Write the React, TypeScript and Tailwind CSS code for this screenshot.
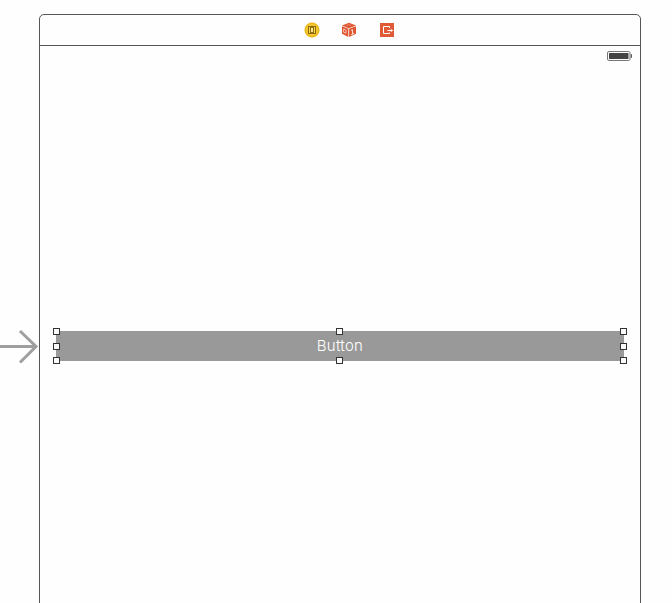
import React from "react";

function ControllerIcon() {
  return (
    <svg className="h-4 w-4" viewBox="0 0 16 16" fill="none">
      <circle cx="8" cy="8" r="7.5" fill="#f5c62c" />
      <circle cx="8" cy="8" r="6.8" stroke="#e8b21c" strokeWidth="1" />
      <rect x="4.5" y="4.5" width="7" height="7" fill="#fbd94f" stroke="#8a6a10" />
      <rect x="6.5" y="5.5" width="3" height="5" fill="#fbe48a" stroke="#94700f" />
    </svg>
  );
}

function ResponderIcon() {
  return (
    <svg className="h-4 w-4" viewBox="0 0 16 16" fill="none">
      <path d="M8 .8 15 3.6 7.7 6.2 1 3.6Z" fill="#df5530" />
      <path d="M1 4.3 7.3 6.8V15L1 11.8Z" fill="#df5530" />
      <path d="M8.1 6.8 15 4.3V11.8L8.1 15Z" fill="#df5530" />
      <path d="M2.6 7 5 8V11.2L2.6 10.2Z" stroke="#f7cabb" strokeWidth=".9" />
      <path d="M10 8.5 11.6 7.7V12.2M10.2 12.6 13 11.4" stroke="#fbe4dc" strokeWidth="1" />
      <path d="m5.4 3.6 2.3-1 2.5 1" stroke="#ee9c85" strokeWidth=".7" />
    </svg>
  );
}

function ExitIcon() {
  return (
    <svg className="h-4 w-4" viewBox="0 0 16 16" fill="none">
      <rect x="1" y="1" width="14" height="14" fill="#e05a36" />
      <path d="M10.5 6V4.5H4.5V11.5H10.5V10.5" stroke="#fff" strokeWidth="1" />
      <path d="M8.5 8.5H13.5" stroke="#fff" strokeWidth="1" />
      <path d="M11.8 6.8 14 8.5 11.8 10.2Z" fill="#fff" />
    </svg>
  );
}

function Handle() {
  return <i className="size-[7px] border border-[#333] bg-[#fafafa]" />;
}

function Handles() {
  return (
    <div className="absolute -inset-[3px] flex flex-col">
      <div className="grid grid-cols-[283px_284px_7px]">
        <Handle />
        <Handle />
        <Handle />
      </div>
      <div className="mt-2 flex justify-between">
        <Handle />
        <Handle />
      </div>
      <div className="mt-[7px] grid grid-cols-[283px_284px_7px]">
        <Handle />
        <Handle />
        <Handle />
      </div>
    </div>
  );
}

export default function App() {
  return (
    <div className="flex h-[603px] w-[672px] overflow-hidden bg-[#fefefe] pt-3.5 font-[Inter,sans-serif]">
      <div className="w-[39px] shrink-0 pt-[312px]">
        <svg className="block h-10 w-[39px]" viewBox="0 0 39 40" fill="none" stroke="#9f9f9f" strokeWidth="3">
          <path d="M0 20.5H36M20 5 36 20.5 20 36.5" />
        </svg>
      </div>
      <main className="flex h-[600px] w-[602px] shrink-0 flex-col rounded-t-[5px] border border-[#555] bg-[#fefefe]">
        <header className="flex h-[31px] shrink-0 items-center border-b border-[#555] pl-[264px]">
          <ControllerIcon />
          <div className="mr-[22px] ml-[21px]">
            <ResponderIcon />
          </div>
          <ExitIcon />
        </header>
        <div className="flex justify-end pt-[5px] pr-2">
          <svg className="block h-[10px] w-[25px]" viewBox="0 0 25 10" fill="none">
            <rect x=".5" y=".5" width="22.5" height="9" rx="1.5" stroke="#777" />
            <rect x="2" y="2" width="19.5" height="6" rx=".5" fill="#444" />
            <path d="M24 3C25.2 3.5 25.2 6.5 24 7Z" fill="#555" stroke="#555" strokeWidth=".5" />
          </svg>
        </div>
        <div className="relative mx-4 mt-[270px] flex h-[30px] shrink-0 items-center justify-center bg-[#999]">
          <span className="text-[15px] leading-[30px] font-light tracking-[0.25px] text-white">Button</span>
          <Handles />
        </div>
      </main>
    </div>
  );
}
